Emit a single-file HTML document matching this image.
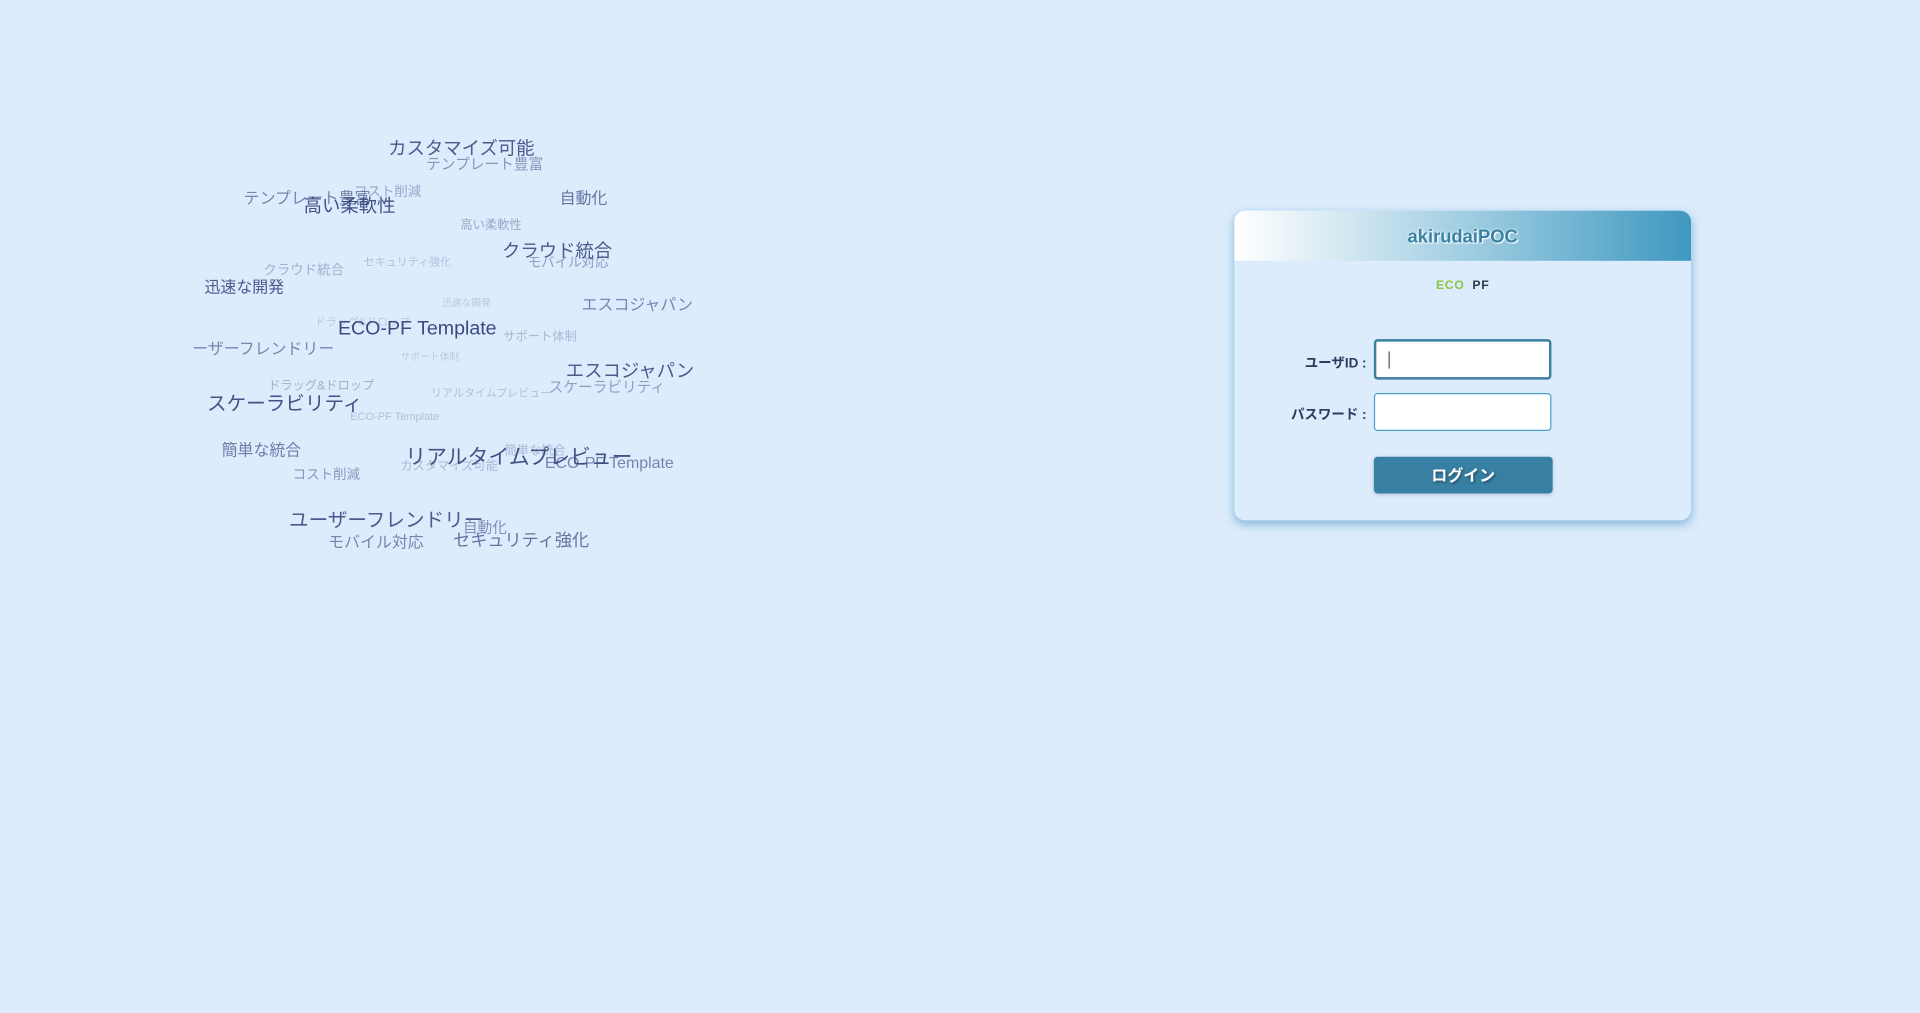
<!DOCTYPE html>
<html><head><meta charset="utf-8"><style>
html,body{margin:0;padding:0;width:1920px;height:1013px;overflow:hidden;background:#dcecfd;}
#s{position:absolute;left:0;top:0;width:1568px;height:827px;transform:scale(1.22449);transform-origin:0 0;font-family:"Liberation Sans","Noto Sans CJK JP",sans-serif;}
.w{position:absolute;white-space:nowrap;line-height:1;}
.box{position:absolute;left:1008px;top:172px;width:373px;height:253px;border-radius:9px;background:#dcecfd;box-shadow:0 3px 8px rgba(60,140,180,.55);overflow:hidden;}
.hd{height:41px;background:linear-gradient(90deg,#ffffff 0%,#c8e2ee 30%,#8ec4dc 60%,#3f98c0 100%);text-align:center;line-height:43px;font-weight:bold;font-size:15px;color:#3a82a5;text-shadow:0 0 2px #fff,1px 1px 1px #fff;}
.lab{position:absolute;right:265px;font-size:11px;font-weight:bold;color:#2c3a5c;font-family:"Liberation Sans","Noto Sans CJK JP",sans-serif;}
.in{position:absolute;left:114px;width:145px;background:#fff;border-radius:3px;box-sizing:border-box;}
</style></head><body><div id="s">
<div class="w" style="left:317px;top:114px;font-size:15px;color:rgba(50,65,120,.85)">カスタマイズ可能</div>
<div class="w" style="left:348px;top:128px;font-size:12px;color:rgba(50,65,120,.5)">テンプレート豊富</div>
<div class="w" style="left:199px;top:155px;font-size:13px;color:rgba(50,65,120,.6)">テンプレート豊富</div>
<div class="w" style="left:289px;top:152px;font-size:11px;color:rgba(50,65,120,.4)">コスト削減</div>
<div class="w" style="left:248px;top:161px;font-size:15px;color:rgba(50,65,120,.9)">高い柔軟性</div>
<div class="w" style="left:457px;top:155px;font-size:13px;color:rgba(50,65,120,.7)">自動化</div>
<div class="w" style="left:376px;top:180px;font-size:10px;color:rgba(50,65,120,.4)">高い柔軟性</div>
<div class="w" style="left:410px;top:198px;font-size:15px;color:rgba(50,65,120,.85)">クラウド統合</div>
<div class="w" style="left:431px;top:210px;font-size:11px;color:rgba(50,65,120,.45)">モバイル対応</div>
<div class="w" style="left:297px;top:210px;font-size:9px;color:rgba(50,65,120,.25)">セキュリティ強化</div>
<div class="w" style="left:215px;top:216px;font-size:11px;color:rgba(50,65,120,.35)">クラウド統合</div>
<div class="w" style="left:167px;top:228px;font-size:13px;color:rgba(50,65,120,.85)">迅速な開発</div>
<div class="w" style="left:361px;top:244px;font-size:8px;color:rgba(50,65,120,.2)">迅速な開発</div>
<div class="w" style="left:475px;top:242px;font-size:13px;color:rgba(50,65,120,.6)">エスコジャパン</div>
<div class="w" style="left:257px;top:259px;font-size:9px;color:rgba(50,65,120,.2)">ドラッグ&amp;ドロップ</div>
<div class="w" style="left:276px;top:261px;font-size:16px;color:rgba(50,65,120,.95)">ECO-PF Template</div>
<div class="w" style="left:411px;top:271px;font-size:10px;color:rgba(50,65,120,.3)">サポート体制</div>
<div class="w" style="left:157px;top:278px;font-size:13px;color:rgba(50,65,120,.6)">ーザーフレンドリー</div>
<div class="w" style="left:327px;top:288px;font-size:8px;color:rgba(50,65,120,.2)">サポート体制</div>
<div class="w" style="left:462px;top:296px;font-size:15px;color:rgba(50,65,120,.85)">エスコジャパン</div>
<div class="w" style="left:219px;top:311px;font-size:10px;color:rgba(50,65,120,.35)">ドラッグ&amp;ドロップ</div>
<div class="w" style="left:352px;top:317px;font-size:9px;color:rgba(50,65,120,.25)">リアルタイムプレビュー</div>
<div class="w" style="left:448px;top:310px;font-size:12px;color:rgba(50,65,120,.45)">スケーラビリティ</div>
<div class="w" style="left:169px;top:323px;font-size:16px;color:rgba(50,65,120,.9)">スケーラビリティ</div>
<div class="w" style="left:286px;top:336px;font-size:9px;color:rgba(50,65,120,.25)">ECO-PF Template</div>
<div class="w" style="left:181px;top:361px;font-size:13px;color:rgba(50,65,120,.65)">簡単な統合</div>
<div class="w" style="left:412px;top:364px;font-size:10px;color:rgba(50,65,120,.3)">簡単な統合</div>
<div class="w" style="left:331px;top:365px;font-size:17px;color:rgba(50,65,120,.9)">リアルタイムプレビュー</div>
<div class="w" style="left:445px;top:371px;font-size:13px;color:rgba(50,65,120,.6)">ECO-PF Template</div>
<div class="w" style="left:327px;top:377px;font-size:10px;color:rgba(50,65,120,.3)">カスタマイズ可能</div>
<div class="w" style="left:239px;top:383px;font-size:11px;color:rgba(50,65,120,.5)">コスト削減</div>
<div class="w" style="left:236px;top:418px;font-size:16px;color:rgba(50,65,120,.85)">ユーザーフレンドリー</div>
<div class="w" style="left:378px;top:425px;font-size:12px;color:rgba(50,65,120,.55)">自動化</div>
<div class="w" style="left:268px;top:436px;font-size:13px;color:rgba(50,65,120,.6)">モバイル対応</div>
<div class="w" style="left:370px;top:434px;font-size:14px;color:rgba(50,65,120,.7)">セキュリティ強化</div>

<div class="box">
<div class="hd">akirudaiPOC</div>
<div style="position:absolute;left:0;right:0;top:56px;text-align:center;font-size:10px;font-weight:bold;letter-spacing:.5px"><span style="color:#8cc63f">ECO</span>&nbsp;&nbsp;<span style="color:#2c3a4c">PF</span></div>
<div class="lab" style="top:116px">ユーザID :</div>
<div class="in" style="top:105px;height:33px;border:2px solid #3a7fa0;"><div style="position:absolute;left:10px;top:8px;width:1px;height:14px;background:#555"></div></div>
<div class="lab" style="top:158px">パスワード :</div>
<div class="in" style="top:149px;height:31px;border:1px solid #4a9fcc;"></div>
<div style="position:absolute;left:114px;top:201px;width:146px;height:30px;background:#3880a3;border-radius:3px;color:#fff;text-align:center;line-height:31px;font-size:13px;font-weight:bold;text-shadow:1px 1px 2px rgba(0,0,0,.4);box-shadow:0 1px 3px rgba(0,0,0,.15)">ログイン</div>
</div>
</div></body></html>
